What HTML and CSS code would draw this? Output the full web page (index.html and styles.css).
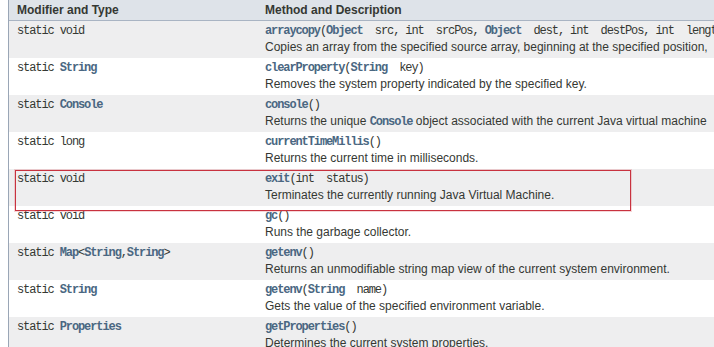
FILE: index.html
```html
<!DOCTYPE html>
<html>
<head>
<meta charset="utf-8">
<link rel="stylesheet" href="styles.css">
</head>
<body>
<div class="page">
  <div class="summary">
    <div class="row head">
      <div class="first">Modifier and Type</div>
      <div class="last">Method and Description</div>
    </div>
    <div class="row alt">
      <div class="first"><code>static void</code></div>
      <div class="last">
        <code><b>arraycopy</b>(<b>Object</b>  src, int  srcPos, <b>Object</b>  dest, int  destPos, int  length)</code>
        <div class="desc">Copies an array from the specified source array, beginning at the specified position,</div>
      </div>
    </div>
    <div class="row">
      <div class="first"><code>static <b>String</b></code></div>
      <div class="last">
        <code><b>clearProperty</b>(<b>String</b>  key)</code>
        <div class="desc">Removes the system property indicated by the specified key.</div>
      </div>
    </div>
    <div class="row alt">
      <div class="first"><code>static <b>Console</b></code></div>
      <div class="last">
        <code><b>console</b>()</code>
        <div class="desc">Returns the unique <code><b>Console</b></code> object associated with the current Java virtual machine</div>
      </div>
    </div>
    <div class="row">
      <div class="first"><code>static long</code></div>
      <div class="last">
        <code><b>currentTimeMillis</b>()</code>
        <div class="desc">Returns the current time in milliseconds.</div>
      </div>
    </div>
    <div class="row alt">
      <div class="first"><code>static void</code></div>
      <div class="last">
        <code><b>exit</b>(int  status)</code>
        <div class="desc">Terminates the currently running Java Virtual Machine.</div>
      </div>
    </div>
    <div class="row">
      <div class="first"><code>static void</code></div>
      <div class="last">
        <code><b>gc</b>()</code>
        <div class="desc">Runs the garbage collector.</div>
      </div>
    </div>
    <div class="row alt">
      <div class="first"><code>static <b>Map</b>&lt;<b>String</b>,<b>String</b>&gt;</code></div>
      <div class="last">
        <code><b>getenv</b>()</code>
        <div class="desc">Returns an unmodifiable string map view of the current system environment.</div>
      </div>
    </div>
    <div class="row">
      <div class="first"><code>static <b>String</b></code></div>
      <div class="last">
        <code><b>getenv</b>(<b>String</b>  name)</code>
        <div class="desc">Gets the value of the specified environment variable.</div>
      </div>
    </div>
    <div class="row alt">
      <div class="first"><code>static <b>Properties</b></code></div>
      <div class="last">
        <code><b>getProperties</b>()</code>
        <div class="desc">Determines the current system properties.</div>
      </div>
    </div>
  </div>
  <div class="highlight"></div>
</div>
</body>
</html>
```

FILE: styles.css
```css
html, body {
  margin: 0;
  padding: 0;
  background: #ffffff;
  overflow: hidden;
}
body {
  width: 714px;
  height: 347px;
}
.page {
  position: relative;
  padding-left: 8px;
  font-family: "Liberation Sans", Arial, sans-serif;
  font-size: 12px;
  color: #353833;
}
.summary {
  border-left: 1px solid #9aa6b6;
  display: flex;
  flex-direction: column;
}
.row {
  display: flex;
  height: 37px;
  background: #ffffff;
  white-space: nowrap;
}
.row.alt {
  background: #eeeeef;
}
.row.head {
  height: 20px;
  background: #dee3e9;
  border-bottom: 1px solid #a9b4c3;
  font-weight: bold;
  line-height: 20px;
}
.first {
  width: 240px;
  flex: none;
  padding-left: 8px;
}
.last {
  flex: 1;
  padding-left: 8px;
  min-width: 0;
  overflow: hidden;
}
.row:not(.head) .first,
.row:not(.head) .last {
  padding-top: 3px;
}
code {
  display: block;
  font-family: "Liberation Mono", "Courier New", monospace;
  font-size: 12px;
  letter-spacing: -1.1px;
  line-height: 15px;
  white-space: pre;
  color: #353833;
}
.desc code {
  display: inline;
  line-height: 17px;
}
code b {
  color: #4a6782;
  font-weight: bold;
}
.desc {
  line-height: 17px;
  font-size: 12px;
  color: #353833;
}
.highlight {
  position: absolute;
  left: 15px;
  top: 170px;
  width: 614px;
  height: 39px;
  border: 1px solid #c8323f;
  box-shadow: 0 0 0 1px rgba(220, 90, 100, 0.25);
}
```
